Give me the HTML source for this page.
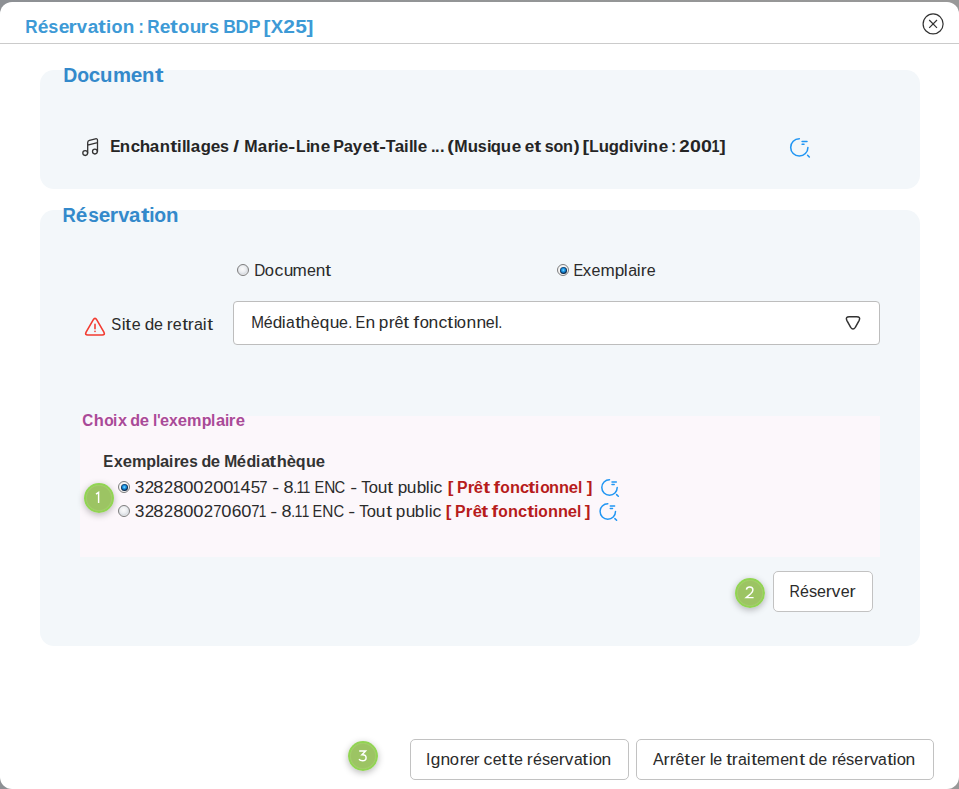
<!DOCTYPE html>
<html><head><meta charset="utf-8">
<style>
*{box-sizing:border-box;margin:0;padding:0}
html,body{width:959px;height:789px;overflow:hidden;background:linear-gradient(90deg,#8d9094,#939596 50%,#989898);font-family:"Liberation Sans",sans-serif;color:#2b2b2b}
.modal{position:absolute;left:0;top:1.6px;width:959.4px;height:787.8px;background:#fff;border-radius:12px;overflow:hidden}
.t{position:absolute;white-space:nowrap}
.t b{font-weight:bold}
.tn,.tb{position:absolute;left:0;width:959px;height:20px;white-space:nowrap}
.tb{font-weight:bold}
.tn i,.tb i{position:absolute;top:0;font-style:normal}
.abs{position:absolute}
.panel{position:absolute;background:#f3f7fa;border-radius:14px}
.badge{position:absolute;width:30px;height:30px;border-radius:50%;background:radial-gradient(circle,#9cc463 0,#9cc463 11.5px,#a3cd6a 12.8px,#91d453 13.4px);border:0;box-shadow:0 2px 7px rgba(0,0,0,.28)}
.btn{position:absolute;background:#fff;border:1px solid #c2c2c2;border-radius:5px}
.radio{position:absolute;width:12px;height:12px;border-radius:50%;border:1px solid #7d7d7d;background:radial-gradient(circle at 45% 40%,#fbfbfb 0,#eceef1 40%,#d9dde2 62%,#f8f8f8 75%)}
.radio.on{background:#f4f4f4}
.radio.on::after{content:"";position:absolute;left:1.5px;top:1.5px;width:7px;height:7px;border-radius:50%;background:radial-gradient(circle at 48% 45%,#8fdcff 0,#22a0ea 1.3px,#1478c4 2.2px,#0a3d6e 2.9px,#07223f 3.5px)}
</style></head><body>
<div class="modal"></div>
<div class="tb" style="top:18.0px;font-size:18px;line-height:18px;color:#3d9ad6"><i style="left:24.91px;transform:scaleX(0.948)">R</i><i style="left:37.90px;transform:scaleX(1.067)">é</i><i style="left:48.22px">s</i><i style="left:58.55px;transform:scaleX(1.070)">e</i><i style="left:69.49px;transform:scaleX(1.167)">r</i><i style="left:77.23px;transform:scaleX(1.030)">v</i><i style="left:87.64px;transform:scaleX(1.053)">a</i><i style="left:99.11px;transform:scaleX(1.300)">t</i><i style="left:106.39px;transform:scaleX(1.031)">i</i><i style="left:111.47px">o</i><i style="left:122.76px;transform:scaleX(1.053)">n</i><i style="left:137.50px;transform:scaleX(0.875)">:</i><i style="left:146.62px;transform:scaleX(0.947)">R</i><i style="left:159.61px;transform:scaleX(1.065)">e</i><i style="left:171.16px;transform:scaleX(1.300)">t</i><i style="left:178.34px">o</i><i style="left:189.62px;transform:scaleX(1.050)">u</i><i style="left:201.48px;transform:scaleX(1.167)">r</i><i style="left:209.03px">s</i><i style="left:222.68px;transform:scaleX(0.975)">B</i><i style="left:235.46px">D</i><i style="left:248.46px">P</i><i style="left:264.48px;transform:scaleX(1.148)">[</i><i style="left:271.13px;transform:scaleX(1.035)">X</i><i style="left:284.19px;transform:scaleX(1.168)">2</i><i style="left:295.85px;transform:scaleX(1.160)">5</i><i style="left:307.12px;transform:scaleX(1.151)">]</i></div>
<svg class="abs" style="left:0;top:0" width="959" height="789" viewBox="0 0 959 789">
  <g fill="none" stroke="#333" stroke-width="1.2"><circle cx="933.1" cy="23.9" r="10"/><path d="M929.2 20L937 27.8M937 20L929.2 27.8"/></g>
</svg>
<div class="abs" style="left:0;top:43px;width:959px;height:1px;background:#cbcbcb"></div>

<div class="panel" style="left:40px;top:70px;width:880px;height:119px"></div>
<div class="tb" style="top:65.0px;font-size:20px;line-height:20px;color:#3389cb"><i style="left:62.80px;transform:scaleX(0.973)">D</i><i style="left:76.86px;transform:scaleX(0.969)">o</i><i style="left:89.04px;transform:scaleX(1.027)">c</i><i style="left:100.42px;transform:scaleX(1.018)">u</i><i style="left:112.86px;transform:scaleX(1.014)">m</i><i style="left:130.98px;transform:scaleX(1.039)">e</i><i style="left:142.39px;transform:scaleX(1.013)">n</i><i style="left:155.62px;transform:scaleX(1.285)">t</i></div>
<div class="tb" style="top:139.0px;font-size:16px;line-height:16px;color:#252525"><i style="left:109.58px;transform:scaleX(0.959)">E</i><i style="left:120.28px;transform:scaleX(1.053)">n</i><i style="left:130.57px;transform:scaleX(1.061)">c</i><i style="left:140.06px;transform:scaleX(1.065)">h</i><i style="left:150.42px;transform:scaleX(1.061)">a</i><i style="left:159.80px;transform:scaleX(1.045)">n</i><i style="left:170.85px;transform:scaleX(1.300)">t</i><i style="left:177.32px;transform:scaleX(1.032)">i</i><i style="left:181.90px;transform:scaleX(1.032)">l</i><i style="left:186.48px;transform:scaleX(1.032)">l</i><i style="left:191.26px;transform:scaleX(1.061)">a</i><i style="left:200.61px;transform:scaleX(1.038)">g</i><i style="left:210.87px;transform:scaleX(1.068)">e</i><i style="left:220.05px">s</i><i style="left:234.39px;transform:scaleX(1.300)">/</i><i style="left:244.25px">M</i><i style="left:257.81px;transform:scaleX(1.061)">a</i><i style="left:267.50px;transform:scaleX(1.168)">r</i><i style="left:274.31px;transform:scaleX(1.032)">i</i><i style="left:279.12px;transform:scaleX(1.068)">e</i><i style="left:289.44px;transform:scaleX(1.300)">-</i><i style="left:295.78px;transform:scaleX(0.978)">L</i><i style="left:305.51px;transform:scaleX(1.032)">i</i><i style="left:310.28px;transform:scaleX(1.053)">n</i><i style="left:320.61px;transform:scaleX(1.070)">e</i><i style="left:333.21px">P</i><i style="left:343.99px;transform:scaleX(1.032)">a</i><i style="left:353.19px;transform:scaleX(1.039)">y</i><i style="left:362.54px;transform:scaleX(1.065)">e</i><i style="left:372.76px;transform:scaleX(1.300)">t</i><i style="left:379.81px;transform:scaleX(1.254)">-</i><i style="left:385.85px">T</i><i style="left:394.75px;transform:scaleX(1.063)">a</i><i style="left:403.99px;transform:scaleX(1.028)">i</i><i style="left:408.56px;transform:scaleX(1.032)">l</i><i style="left:413.14px;transform:scaleX(1.032)">l</i><i style="left:417.95px;transform:scaleX(1.068)">e</i><i style="left:430.61px;transform:scaleX(1.021)">.</i><i style="left:435.15px;transform:scaleX(1.025)">.</i><i style="left:439.70px;transform:scaleX(1.025)">.</i><i style="left:448.23px;transform:scaleX(1.238)">(</i><i style="left:454.14px">M</i><i style="left:467.67px;transform:scaleX(1.050)">u</i><i style="left:477.66px">s</i><i style="left:486.60px;transform:scaleX(1.032)">i</i><i style="left:491.28px;transform:scaleX(1.034)">q</i><i style="left:501.45px;transform:scaleX(1.050)">u</i><i style="left:511.76px;transform:scaleX(1.068)">e</i><i style="left:524.66px;transform:scaleX(1.067)">e</i><i style="left:534.92px;transform:scaleX(1.300)">t</i><i style="left:544.71px">s</i><i style="left:553.58px">o</i><i style="left:563.43px;transform:scaleX(1.018)">n</i><i style="left:573.70px;transform:scaleX(1.155)">)</i><i style="left:583.45px;transform:scaleX(1.231)">[</i><i style="left:589.22px;transform:scaleX(0.965)">L</i><i style="left:599.07px;transform:scaleX(1.051)">u</i><i style="left:609.27px;transform:scaleX(1.038)">g</i><i style="left:619.39px;transform:scaleX(1.034)">d</i><i style="left:629.39px;transform:scaleX(1.032)">i</i><i style="left:634.21px;transform:scaleX(1.070)">v</i><i style="left:643.48px;transform:scaleX(1.032)">i</i><i style="left:648.25px;transform:scaleX(1.054)">n</i><i style="left:658.59px;transform:scaleX(1.068)">e</i><i style="left:670.86px;transform:scaleX(0.877)">:</i><i style="left:680.03px;transform:scaleX(1.170)">2</i><i style="left:690.67px;transform:scaleX(1.223)">0</i><i style="left:701.54px;transform:scaleX(1.223)">0</i><i style="left:710.96px;transform:scaleX(0.895)">1</i><i style="left:719.78px;transform:scaleX(1.152)">]</i></div>

<div class="panel" style="left:40px;top:210px;width:880px;height:436px"></div>
<div class="tb" style="top:205.0px;font-size:20px;line-height:20px;color:#3389cb"><i style="left:62.35px;transform:scaleX(0.923)">R</i><i style="left:76.43px;transform:scaleX(1.036)">é</i><i style="left:87.52px;transform:scaleX(0.957)">s</i><i style="left:98.62px;transform:scaleX(1.039)">e</i><i style="left:110.23px;transform:scaleX(1.072)">r</i><i style="left:118.26px">v</i><i style="left:129.45px;transform:scaleX(1.020)">a</i><i style="left:141.62px;transform:scaleX(1.285)">t</i><i style="left:149.11px;transform:scaleX(0.952)">i</i><i style="left:154.34px;transform:scaleX(0.969)">o</i><i style="left:166.49px;transform:scaleX(1.020)">n</i></div>
<div class="radio" style="left:237px;top:264px"></div>
<div class="tn" style="top:263.0px;font-size:16px;line-height:16px;color:#2b2b2b"><i style="left:253.83px;transform:scaleX(0.954)">D</i><i style="left:265.26px;transform:scaleX(1.033)">o</i><i style="left:274.73px;transform:scaleX(1.105)">c</i><i style="left:283.51px;transform:scaleX(1.084)">u</i><i style="left:293.22px;transform:scaleX(1.067)">m</i><i style="left:307.02px">e</i><i style="left:316.29px;transform:scaleX(1.077)">n</i><i style="left:326.44px;transform:scaleX(1.300)">t</i></div>
<div class="radio on" style="left:557px;top:264px"></div>
<div class="tn" style="top:263.0px;font-size:16px;line-height:16px;color:#2b2b2b"><i style="left:573.02px;transform:scaleX(0.909)">E</i><i style="left:583.39px;transform:scaleX(1.051)">x</i><i style="left:591.62px">e</i><i style="left:600.99px;transform:scaleX(1.067)">m</i><i style="left:615.09px;transform:scaleX(1.072)">p</i><i style="left:624.47px;transform:scaleX(1.096)">l</i><i style="left:628.16px">a</i><i style="left:637.18px;transform:scaleX(1.092)">i</i><i style="left:641.19px;transform:scaleX(1.111)">r</i><i style="left:646.85px">e</i></div>
<div class="tn" style="top:317.0px;font-size:16px;line-height:16px;color:#2b2b2b"><i style="left:111.19px;transform:scaleX(0.933)">S</i><i style="left:121.65px;transform:scaleX(1.092)">i</i><i style="left:126.28px;transform:scaleX(1.300)">t</i><i style="left:131.66px">e</i><i style="left:144.82px;transform:scaleX(1.070)">d</i><i style="left:154.06px">e</i><i style="left:167.21px;transform:scaleX(1.111)">r</i><i style="left:172.84px">e</i><i style="left:182.64px;transform:scaleX(1.300)">t</i><i style="left:188.30px;transform:scaleX(1.117)">r</i><i style="left:193.91px">a</i><i style="left:202.93px;transform:scaleX(1.092)">i</i><i style="left:207.55px;transform:scaleX(1.300)">t</i></div>
<div class="abs" style="left:233px;top:301px;width:647px;height:44px;background:#fff;border:1px solid #bdbdbd;border-radius:4px"></div>
<div class="tn" style="top:315.0px;font-size:16px;line-height:16px;color:#2b2b2b"><i style="left:250.70px;transform:scaleX(0.954)">M</i><i style="left:263.73px">é</i><i style="left:272.97px;transform:scaleX(1.070)">d</i><i style="left:282.34px;transform:scaleX(1.092)">i</i><i style="left:285.98px;transform:scaleX(0.984)">a</i><i style="left:295.71px;transform:scaleX(1.300)">t</i><i style="left:301.48px;transform:scaleX(1.095)">h</i><i style="left:310.84px">è</i><i style="left:320.09px;transform:scaleX(1.072)">q</i><i style="left:329.67px;transform:scaleX(1.084)">u</i><i style="left:338.97px">e</i><i style="left:347.69px;transform:scaleX(0.909)">.</i><i style="left:355.37px;transform:scaleX(0.911)">E</i><i style="left:365.95px;transform:scaleX(1.089)">n</i><i style="left:379.48px;transform:scaleX(1.072)">p</i><i style="left:388.98px;transform:scaleX(1.111)">r</i><i style="left:394.62px">ê</i><i style="left:404.44px;transform:scaleX(1.300)">t</i><i style="left:414.18px;transform:scaleX(1.300)">f</i><i style="left:419.55px;transform:scaleX(1.032)">o</i><i style="left:428.98px;transform:scaleX(1.091)">n</i><i style="left:438.70px;transform:scaleX(1.103)">c</i><i style="left:448.02px;transform:scaleX(1.300)">t</i><i style="left:453.53px;transform:scaleX(1.088)">i</i><i style="left:457.38px;transform:scaleX(1.033)">o</i><i style="left:466.83px;transform:scaleX(1.091)">n</i><i style="left:476.52px;transform:scaleX(1.089)">n</i><i style="left:485.85px">e</i><i style="left:494.95px;transform:scaleX(1.092)">l</i><i style="left:498.46px;transform:scaleX(0.912)">.</i></div>

<div class="abs" style="left:80px;top:416px;width:800px;height:141px;background:#fcf7fb"></div>
<div class="tb" style="top:413.0px;font-size:16px;line-height:16px;color:#a94a98"><i style="left:82.45px;transform:scaleX(0.947)">C</i><i style="left:93.84px;transform:scaleX(1.030)">h</i><i style="left:103.60px;transform:scaleX(0.970)">o</i><i style="left:113.12px;transform:scaleX(0.954)">i</i><i style="left:117.52px;transform:scaleX(1.014)">x</i><i style="left:130.16px">d</i><i style="left:140.11px;transform:scaleX(1.039)">e</i><i style="left:152.74px;transform:scaleX(0.954)">l</i><i style="left:156.80px;transform:scaleX(0.857)">'</i><i style="left:160.39px;transform:scaleX(1.014)">e</i><i style="left:169.27px;transform:scaleX(0.982)">x</i><i style="left:178.25px;transform:scaleX(1.039)">e</i><i style="left:187.42px;transform:scaleX(1.015)">m</i><i style="left:201.78px">p</i><i style="left:211.48px;transform:scaleX(0.954)">l</i><i style="left:215.94px;transform:scaleX(1.028)">a</i><i style="left:224.84px;transform:scaleX(0.951)">i</i><i style="left:229.34px;transform:scaleX(1.055)">r</i><i style="left:235.91px;transform:scaleX(1.039)">e</i></div>
<div class="tb" style="top:454.0px;font-size:16px;line-height:16px;color:#333"><i style="left:103.39px;transform:scaleX(0.933)">E</i><i style="left:113.62px;transform:scaleX(0.984)">x</i><i style="left:122.61px;transform:scaleX(1.039)">e</i><i style="left:131.78px;transform:scaleX(1.015)">m</i><i style="left:146.14px">p</i><i style="left:155.84px;transform:scaleX(0.954)">l</i><i style="left:160.30px;transform:scaleX(1.028)">a</i><i style="left:169.20px;transform:scaleX(0.951)">i</i><i style="left:173.70px;transform:scaleX(1.055)">r</i><i style="left:180.26px;transform:scaleX(1.037)">e</i><i style="left:189.12px;transform:scaleX(0.958)">s</i><i style="left:201.52px">d</i><i style="left:211.47px;transform:scaleX(1.039)">e</i><i style="left:224.03px;transform:scaleX(0.974)">M</i><i style="left:237.34px;transform:scaleX(1.039)">é</i><i style="left:246.43px">d</i><i style="left:256.11px;transform:scaleX(0.951)">i</i><i style="left:260.52px;transform:scaleX(1.019)">a</i><i style="left:270.27px;transform:scaleX(1.290)">t</i><i style="left:276.52px;transform:scaleX(1.032)">h</i><i style="left:286.60px;transform:scaleX(1.037)">è</i><i style="left:295.69px">q</i><i style="left:305.57px;transform:scaleX(1.018)">u</i><i style="left:315.59px;transform:scaleX(1.039)">e</i></div>
<div class="radio on" style="left:118px;top:481px"></div>
<div class="tn" style="top:480.0px;font-size:16px;line-height:16px;color:#2b2b2b"><i style="left:135.01px;transform:scaleX(1.081)">3</i><i style="left:144.51px;transform:scaleX(1.056)">2</i><i style="left:154.29px;transform:scaleX(1.144)">8</i><i style="left:164.07px;transform:scaleX(1.056)">2</i><i style="left:173.86px;transform:scaleX(1.146)">8</i><i style="left:184.03px;transform:scaleX(1.142)">0</i><i style="left:194.19px;transform:scaleX(1.142)">0</i><i style="left:203.96px;transform:scaleX(1.056)">2</i><i style="left:213.74px;transform:scaleX(1.142)">0</i><i style="left:223.90px;transform:scaleX(1.144)">0</i><i style="left:232.41px;transform:scaleX(0.850)">1</i><i style="left:240.80px;transform:scaleX(1.118)">4</i><i style="left:250.52px;transform:scaleX(1.068)">5</i><i style="left:259.37px;transform:scaleX(0.923)">7</i><i style="left:273.05px;transform:scaleX(1.300)">-</i><i style="left:284.07px;transform:scaleX(1.126)">8</i><i style="left:292.78px;transform:scaleX(0.850)">.</i><i style="left:296.06px;transform:scaleX(0.891)">1</i><i style="left:302.31px;transform:scaleX(0.850)">1</i><i style="left:313.61px;transform:scaleX(0.908)">E</i><i style="left:323.58px;transform:scaleX(0.964)">N</i><i style="left:334.47px;transform:scaleX(0.923)">C</i><i style="left:350.71px;transform:scaleX(1.300)">-</i><i style="left:360.63px;transform:scaleX(0.969)">T</i><i style="left:368.63px;transform:scaleX(1.032)">o</i><i style="left:378.04px;transform:scaleX(1.084)">u</i><i style="left:388.21px;transform:scaleX(1.300)">t</i><i style="left:397.80px;transform:scaleX(1.072)">p</i><i style="left:407.38px;transform:scaleX(1.084)">u</i><i style="left:416.96px;transform:scaleX(1.070)">b</i><i style="left:426.34px;transform:scaleX(1.096)">l</i><i style="left:430.22px;transform:scaleX(1.092)">i</i><i style="left:434.35px;transform:scaleX(1.103)">c</i></div><div class="tb" style="top:480.0px;font-size:16px;line-height:16px;color:#b71c1c"><i style="left:447.92px;transform:scaleX(1.065)">[</i><i style="left:457.00px;transform:scaleX(0.988)">P</i><i style="left:467.78px;transform:scaleX(1.055)">r</i><i style="left:474.32px;transform:scaleX(1.033)">ê</i><i style="left:484.13px;transform:scaleX(1.289)">t</i><i style="left:494.20px;transform:scaleX(1.220)">f</i><i style="left:499.95px;transform:scaleX(0.971)">o</i><i style="left:509.69px;transform:scaleX(1.022)">n</i><i style="left:519.68px;transform:scaleX(1.026)">c</i><i style="left:529.46px;transform:scaleX(1.289)">t</i><i style="left:535.45px;transform:scaleX(0.951)">i</i><i style="left:539.63px;transform:scaleX(0.970)">o</i><i style="left:549.36px;transform:scaleX(1.022)">n</i><i style="left:559.34px;transform:scaleX(1.022)">n</i><i style="left:569.39px;transform:scaleX(1.039)">e</i><i style="left:578.35px;transform:scaleX(0.954)">l</i><i style="left:586.53px;transform:scaleX(1.065)">]</i></div>
<div class="radio" style="left:118px;top:505px"></div>
<div class="tn" style="top:504.0px;font-size:16px;line-height:16px;color:#2b2b2b"><i style="left:135.01px;transform:scaleX(1.081)">3</i><i style="left:144.51px;transform:scaleX(1.056)">2</i><i style="left:154.29px;transform:scaleX(1.144)">8</i><i style="left:164.07px;transform:scaleX(1.056)">2</i><i style="left:173.86px;transform:scaleX(1.146)">8</i><i style="left:184.03px;transform:scaleX(1.142)">0</i><i style="left:194.19px;transform:scaleX(1.142)">0</i><i style="left:203.96px;transform:scaleX(1.056)">2</i><i style="left:212.77px;transform:scaleX(0.925)">7</i><i style="left:221.95px;transform:scaleX(1.142)">0</i><i style="left:231.85px;transform:scaleX(1.084)">6</i><i style="left:241.75px;transform:scaleX(1.142)">0</i><i style="left:250.94px;transform:scaleX(0.925)">7</i><i style="left:258.47px;transform:scaleX(0.850)">1</i><i style="left:271.47px;transform:scaleX(1.300)">-</i><i style="left:282.49px;transform:scaleX(1.128)">8</i><i style="left:291.20px;transform:scaleX(0.850)">.</i><i style="left:294.47px;transform:scaleX(0.889)">1</i><i style="left:300.73px;transform:scaleX(0.850)">1</i><i style="left:312.03px;transform:scaleX(0.908)">E</i><i style="left:322.00px;transform:scaleX(0.964)">N</i><i style="left:332.89px;transform:scaleX(0.923)">C</i><i style="left:349.13px;transform:scaleX(1.300)">-</i><i style="left:359.04px;transform:scaleX(0.969)">T</i><i style="left:367.05px;transform:scaleX(1.033)">o</i><i style="left:376.45px;transform:scaleX(1.082)">u</i><i style="left:386.63px;transform:scaleX(1.300)">t</i><i style="left:396.22px;transform:scaleX(1.072)">p</i><i style="left:405.80px;transform:scaleX(1.082)">u</i><i style="left:415.38px;transform:scaleX(1.072)">b</i><i style="left:424.76px;transform:scaleX(1.096)">l</i><i style="left:428.63px;transform:scaleX(1.088)">i</i><i style="left:432.76px;transform:scaleX(1.105)">c</i></div><div class="tb" style="top:504.0px;font-size:16px;line-height:16px;color:#b71c1c"><i style="left:446.17px;transform:scaleX(1.065)">[</i><i style="left:455.25px;transform:scaleX(0.988)">P</i><i style="left:466.03px;transform:scaleX(1.055)">r</i><i style="left:472.57px;transform:scaleX(1.033)">ê</i><i style="left:482.38px;transform:scaleX(1.289)">t</i><i style="left:492.45px;transform:scaleX(1.220)">f</i><i style="left:498.20px;transform:scaleX(0.971)">o</i><i style="left:507.94px;transform:scaleX(1.022)">n</i><i style="left:517.93px;transform:scaleX(1.026)">c</i><i style="left:527.71px;transform:scaleX(1.289)">t</i><i style="left:533.70px;transform:scaleX(0.951)">i</i><i style="left:537.88px;transform:scaleX(0.970)">o</i><i style="left:547.61px;transform:scaleX(1.022)">n</i><i style="left:557.59px;transform:scaleX(1.022)">n</i><i style="left:567.64px;transform:scaleX(1.039)">e</i><i style="left:576.60px;transform:scaleX(0.954)">l</i><i style="left:584.78px;transform:scaleX(1.065)">]</i></div>

<div class="badge" style="left:83.5px;top:482.7px"></div>
<div class="btn" style="left:773px;top:571px;width:100px;height:41px"></div>
<div class="tn" style="top:584.0px;font-size:16px;line-height:16px;color:#2b2b2b"><i style="left:788.91px;transform:scaleX(0.899)">R</i><i style="left:799.91px">é</i><i style="left:808.92px;transform:scaleX(1.023)">s</i><i style="left:817.03px">e</i><i style="left:826.33px;transform:scaleX(1.140)">r</i><i style="left:832.31px;transform:scaleX(1.070)">v</i><i style="left:840.63px">e</i><i style="left:849.95px;transform:scaleX(1.144)">r</i></div>
<div class="badge" style="left:734.7px;top:577.7px"></div>
<div class="btn" style="left:410px;top:739px;width:219px;height:41px"></div>
<div class="tn" style="top:752.0px;font-size:16px;line-height:16px;color:#2b2b2b"><i style="left:426.46px;transform:scaleX(0.982)">I</i><i style="left:431.19px;transform:scaleX(1.074)">g</i><i style="left:440.81px;transform:scaleX(1.091)">n</i><i style="left:450.26px;transform:scaleX(1.033)">o</i><i style="left:459.60px;transform:scaleX(1.114)">r</i><i style="left:465.25px">e</i><i style="left:474.37px;transform:scaleX(1.073)">r</i><i style="left:484.23px;transform:scaleX(1.105)">c</i><i style="left:492.65px">e</i><i style="left:502.46px;transform:scaleX(1.300)">t</i><i style="left:508.72px;transform:scaleX(1.300)">t</i><i style="left:514.10px">e</i><i style="left:527.25px;transform:scaleX(1.111)">r</i><i style="left:532.91px">é</i><i style="left:541.91px;transform:scaleX(1.021)">s</i><i style="left:550.02px">e</i><i style="left:559.33px;transform:scaleX(1.140)">r</i><i style="left:565.30px;transform:scaleX(1.068)">v</i><i style="left:573.51px;transform:scaleX(0.984)">a</i><i style="left:583.23px;transform:scaleX(1.300)">t</i><i style="left:588.74px;transform:scaleX(1.092)">i</i><i style="left:592.60px;transform:scaleX(1.033)">o</i><i style="left:602.04px;transform:scaleX(1.089)">n</i></div>
<div class="btn" style="left:636px;top:739px;width:298px;height:41px"></div>
<div class="tn" style="top:752.0px;font-size:16px;line-height:16px;color:#2b2b2b"><i style="left:652.88px">A</i><i style="left:663.95px;transform:scaleX(1.144)">r</i><i style="left:669.95px;transform:scaleX(1.114)">r</i><i style="left:675.58px">ê</i><i style="left:685.38px;transform:scaleX(1.300)">t</i><i style="left:690.76px">e</i><i style="left:699.89px;transform:scaleX(1.073)">r</i><i style="left:709.50px;transform:scaleX(1.092)">l</i><i style="left:713.25px">e</i><i style="left:726.66px;transform:scaleX(1.300)">t</i><i style="left:732.33px;transform:scaleX(1.120)">r</i><i style="left:737.93px">a</i><i style="left:746.95px;transform:scaleX(1.092)">i</i><i style="left:751.58px;transform:scaleX(1.300)">t</i><i style="left:756.96px">e</i><i style="left:766.33px;transform:scaleX(1.068)">m</i><i style="left:780.14px">e</i><i style="left:789.41px;transform:scaleX(1.077)">n</i><i style="left:799.55px;transform:scaleX(1.300)">t</i><i style="left:809.13px;transform:scaleX(1.070)">d</i><i style="left:818.37px">e</i><i style="left:831.52px;transform:scaleX(1.111)">r</i><i style="left:837.18px">é</i><i style="left:846.19px;transform:scaleX(1.023)">s</i><i style="left:854.30px">e</i><i style="left:863.60px;transform:scaleX(1.140)">r</i><i style="left:869.58px;transform:scaleX(1.068)">v</i><i style="left:877.78px;transform:scaleX(0.984)">a</i><i style="left:887.51px;transform:scaleX(1.300)">t</i><i style="left:893.01px;transform:scaleX(1.092)">i</i><i style="left:896.87px;transform:scaleX(1.033)">o</i><i style="left:906.32px;transform:scaleX(1.091)">n</i></div>
<div class="badge" style="left:347.7px;top:740.7px"></div>

<svg class="abs" style="left:0;top:0" width="959" height="789" viewBox="0 0 959 789">
  <!-- music -->
  <g fill="none" stroke="#333" stroke-width="1.3" stroke-linecap="round" stroke-linejoin="round">
    <circle cx="85.2" cy="153.1" r="2.4"/><circle cx="94.9" cy="151.6" r="2.4"/>
    <path d="M87.7 152.9V142.5Q87.7 140.9 89.4 140.4L95.4 138.8Q97.5 138.3 97.5 140.3V151.5M87.7 145.1L97.5 142.6"/>
  </g>
  <!-- search-refresh icons -->
  <g fill="none" stroke="#2196f3" stroke-width="1.55" stroke-linecap="round">
    <path d="M799.3 138.8A8.6 8.6 0 1 0 807.9 147.4M802.1 141.5H807M802.1 144.3H804M807.6 155.3L809.3 157"/>
  </g>
  <g fill="none" stroke="#2196f3" stroke-width="1.5" stroke-linecap="round">
    <path d="M609.5 479.8A7.7 7.7 0 1 0 617.2 487.5M612 482.1H616.3M612 484.6H614.2M616.6 494.6L618.3 496.3"/>
    <path d="M607.8 503.8A7.7 7.7 0 1 0 615.5 511.5M610.3 506.1H614.6M610.3 508.6H612.5M614.9 518.6L616.6 520.3"/>
  </g>
  <!-- warning -->
  <g fill="none" stroke="#f23b30" stroke-width="1.6" stroke-linecap="round" stroke-linejoin="round">
    <path d="M93.2 319.9Q95 316.9 96.8 319.9L103.9 332.1Q105.4 335 102.2 335H87.8Q84.6 335 86.1 332.1Z"/>
    <path d="M95 324.4V328.8M95 331.3V331.5"/>
  </g>
  <!-- dropdown -->
  <g fill="none" stroke="#333" stroke-width="1.5" stroke-linejoin="round">
    <path d="M849.3 316.8H856.7Q860.8 316.8 859.2 320.3L855.3 327.3Q853 330.7 850.7 327.3L846.8 320.3Q845.2 316.8 849.3 316.8Z"/>
  </g>
</svg>
<svg class="abs" style="left:0;top:0" width="959" height="789" viewBox="0 0 959 789">
  <g fill="none" stroke="#fff" stroke-width="1.45" stroke-linecap="butt" stroke-linejoin="miter">
    <path d="M98.6 503.1V492.4L96 494.2"/>
    <path d="M746.4 589.7Q746.8 587 749.8 587Q752.9 587 752.9 589.9Q752.9 591.7 750.7 593.7L746.2 597.6H753.6"/>
    <path d="M359.2 750.9H365.6L362 754.8Q366.1 754.6 366.1 757.8Q366.1 760.8 362.6 760.8Q360.2 760.8 359 759.3"/>
  </g>
</svg>
</body></html>
